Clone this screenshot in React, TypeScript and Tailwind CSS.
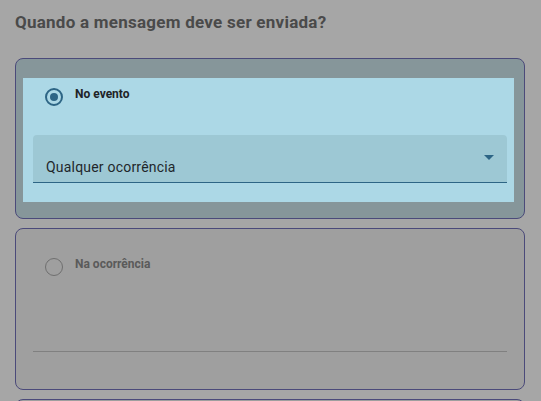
import React from 'react';

function Radio({ checked }: { checked: boolean }) {
  return checked ? (
    <span className="flex h-[18px] w-[18px] shrink-0 items-center justify-center rounded-full border-2 border-[#2d6585]">
      <span className="h-[8px] w-[8px] rounded-full bg-[#2d6585]" />
    </span>
  ) : (
    <span className="h-[18px] w-[18px] shrink-0 rounded-full border border-[#6f6f6f]" />
  );
}

export default function App() {
  return (
    <div className="h-screen overflow-hidden bg-[#a6a6a6] px-[15px] pt-[10px] font-['Roboto',sans-serif]">
      <h1 className="text-[17px] font-bold leading-[24px] tracking-[0.25px] text-[#4a4a4a]">
        Quando a mensagem deve ser enviada?
      </h1>

      <div className="mt-[24px] flex flex-col gap-[9px]">
        {/* Option selected */}
        <div className="h-[161px] w-[510px] rounded-lg border border-[#4b4a7a] bg-[#86969a] pt-[19px]">
          <div className="ml-[7px] h-[124px] w-[491px] bg-[#acd8e6] pl-[10px] pt-[10px]">
            <div className="ml-[12px] flex items-center gap-[12px]">
              <Radio checked />
              <span className="-mt-[6px] text-[12px] font-bold text-[#1e2327]">No evento</span>
            </div>
            <div className="mt-[29px] flex h-[48px] w-[474px] items-center justify-between rounded-t-[4px] border-b border-[#2d6585] bg-[#9dc8d4] pl-[13px] pr-[13px]">
              <span className="mt-[17px] text-[14px] tracking-[0.2px] text-[#1f272b]">Qualquer ocorrência</span>
              <svg width="10" height="5" viewBox="0 0 10 5" className="mt-[-2px]">
                <path d="M0 0 L10 0 L5 5 Z" fill="#2d6585" />
              </svg>
            </div>
          </div>
        </div>

        {/* Option not selected */}
        <div className="h-[162px] w-[510px] rounded-lg border border-[#4b4a7a] bg-[#9f9f9f] pl-[17px] pt-[29px]">
          <div className="ml-[12px] flex items-center gap-[12px]">
            <Radio checked={false} />
            <span className="-mt-[6px] text-[12px] font-bold text-[#5a5a5a]">Na ocorrência</span>
          </div>
          <div className="mt-[28px] h-[48px] w-[474px] border-b border-[#808080]" />
        </div>

        <div className="h-[161px] w-[510px] rounded-lg border border-[#4b4a7a] bg-[#9f9f9f]" />
      </div>
    </div>
  );
}
